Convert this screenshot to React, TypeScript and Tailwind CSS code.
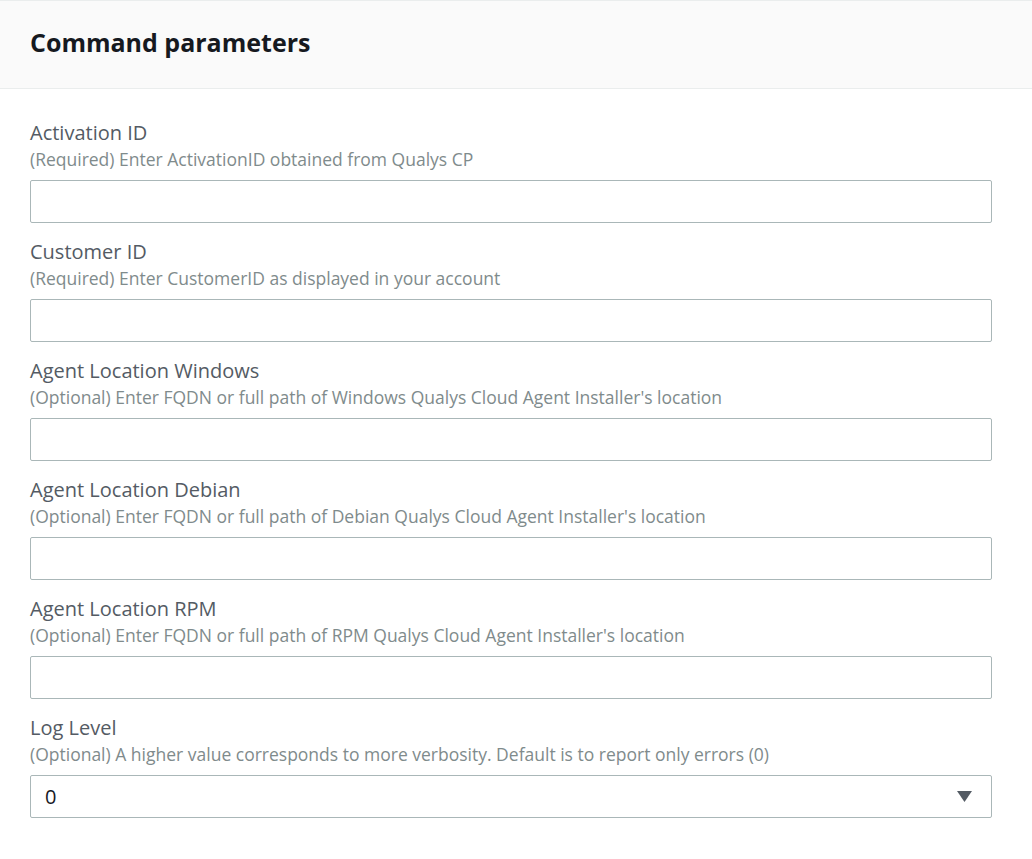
import React from "react";

const fields = [
  { label: "Activation ID", desc: "(Required) Enter ActivationID obtained from Qualys CP" },
  { label: "Customer ID", desc: "(Required) Enter CustomerID as displayed in your account" },
  { label: "Agent Location Windows", desc: "(Optional) Enter FQDN or full path of Windows Qualys Cloud Agent Installer's location" },
  { label: "Agent Location Debian", desc: "(Optional) Enter FQDN or full path of Debian Qualys Cloud Agent Installer's location" },
  { label: "Agent Location RPM", desc: "(Optional) Enter FQDN or full path of RPM Qualys Cloud Agent Installer's location" },
];

export default function App() {
  return (
    <div className="w-[1032px] h-[859px] bg-white overflow-hidden" style={{ fontFamily: '"Open Sans", "Noto Sans", sans-serif' }}>
      <div className="h-[89px] bg-[#fafafa] border-t border-b border-[#eaeded] pl-[30px] pt-[24px]">
        <h2 className="text-[25px] leading-[34px] font-bold text-[#16191f]">Command parameters</h2>
      </div>
      <div className="pl-[30px] pr-[40px] pt-[30px] flex flex-col gap-[15px]">
        {fields.map((f) => (
          <div key={f.label} className="flex flex-col">
            <div className="text-[20px] leading-[28px] text-[#545b64]">{f.label}</div>
            <div className="text-[17.5px] leading-[24px] text-[#7f8b8c]">{f.desc}</div>
            <input className="mt-[9px] h-[43px] w-full border border-[#aab7b8] rounded-[2px] px-[14px] text-[20px] outline-none" />
          </div>
        ))}
        <div className="flex flex-col">
          <div className="text-[20px] leading-[28px] text-[#545b64]">Log Level</div>
          <div className="text-[17.5px] leading-[24px] text-[#7f8b8c]">(Optional) A higher value corresponds to more verbosity. Default is to report only errors (0)</div>
          <div className="mt-[9px] h-[43px] w-full border border-[#aab7b8] rounded-[2px] pl-[14px] pr-[19px] flex items-center justify-between">
            <span className="text-[20px] leading-[28px] text-[#16191f]">0</span>
            <svg width="15" height="11" viewBox="0 0 15 11"><path d="M0 0 H15 L7.5 11 Z" fill="#545b64" /></svg>
          </div>
        </div>
      </div>
    </div>
  );
}
